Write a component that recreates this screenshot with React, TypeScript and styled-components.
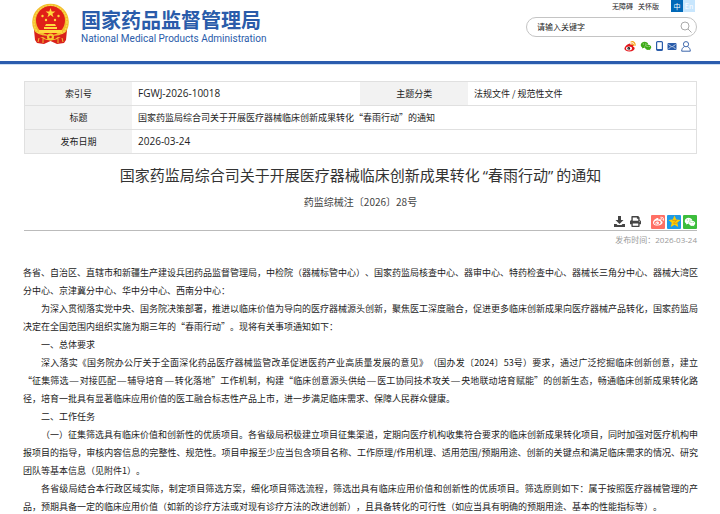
import React from 'react';
import styled, { createGlobalStyle } from 'styled-components';
import { AiFillWechat } from 'react-icons/ai';
import { FaWeibo, FaPrint } from 'react-icons/fa';

const CJK = '"Noto Sans CJK SC", sans-serif';

const GlobalStyle = createGlobalStyle`
  * { box-sizing: border-box; }
  body {
    margin: 0;
    background: #fff;
    color: #222;
    font: 9px/18px ${CJK};
    text-spacing-trim: space-all;
  }
  a { color: inherit; text-decoration: none; }
`;

const Latin = styled.span<{ $large?: boolean }>`
  font-family: "Open Sans", ${CJK};
  ${(p) => (p.$large ? 'font-size: 10px;' : '')}
`;

const Header = styled.header`
  display: flex;
  justify-content: space-between;
  align-items: flex-start;
  height: 65px;
  padding: 0 23px 0 31px;
  border-bottom: 1px solid #cfe0f3;
  box-shadow: inset 0 -3px 0 #2b5cae;
`;

const Brand = styled.a`
  display: flex;
  gap: 11px;
  padding-top: 3px;
`;

const BrandText = styled.span`
  display: flex;
  flex-direction: column;
  padding-top: 6px;
  color: #2a5caa;
`;

const BrandName = styled.span`
  font-size: 20px;
  line-height: 22px;
  font-weight: 700;
`;

const BrandEnglish = styled.span`
  font: 400 10px/16px Roboto, sans-serif;
`;

const Tools = styled.div`
  display: flex;
  flex-direction: column;
  align-items: flex-end;
  width: 171px;
`;

const Links = styled.nav`
  display: flex;
  font-size: 7px;
  line-height: 12px;
  gap: 5px;
  padding-right: 2px;
`;

const Languages = styled.div`
  display: flex;
  margin-left: 7px;
`;

const Language = styled.a<{ $active?: boolean }>`
  width: 12px;
  height: 12px;
  text-align: center;
  color: #fff;
  background: ${(p) => (p.$active ? '#0068b7' : '#c8e6fd')};
`;

const Search = styled.form`
  display: flex;
  align-items: center;
  width: 100%;
  height: 20px;
  margin-top: 5px;
  padding: 0 4px 0 10px;
  border: 1px solid #c4c4c4;
  border-radius: 10px;
`;

const SearchInput = styled.input`
  flex: 1;
  min-width: 0;
  padding: 0;
  border: 0;
  outline: 0;
  background: none;
  font: 8px/16px ${CJK};
  &::placeholder { color: #222; opacity: 1; }
`;

const IconButton = styled.button<{ $color?: string; $fill?: string }>`
  display: flex;
  align-items: center;
  justify-content: center;
  padding: 0;
  border: 0;
  border-radius: 1px;
  cursor: pointer;
  color: ${(p) => p.$color || '#444'};
  background: ${(p) => p.$fill || 'none'};
  ${(p) => (p.$fill ? 'width: 14px; height: 14px;' : '')}
`;

const Channels = styled.div`
  display: flex;
  align-items: center;
  gap: 4px;
  height: 14px;
  margin-top: 2px;
  padding-right: 6px;
`;

const Main = styled.main`
  padding: 16px 23px 0 24px;
`;

const InfoTable = styled.table`
  width: 100%;
  border-collapse: collapse;
  table-layout: fixed;
  border: 1px solid #e0e0e0;
`;

const Row = styled.tr`
  height: 24px;
  border-bottom: 1px solid #e0e0e0;
`;

const Label = styled.th`
  width: 16%;
  padding: 0;
  font-weight: 400;
  background: #f2f2f2;
`;

const Value = styled.td`
  padding: 0 6px;
`;

const Title = styled.h1`
  margin: 9px 0 0;
  text-align: center;
  font-size: 15px;
  line-height: 24px;
  font-weight: 400;
  color: #333;
`;

const Quote = styled.span`
  font-family: "Open Sans", ${CJK};
  &:first-of-type { margin-left: 3px; }
  &:last-of-type { margin-right: 3px; }
`;

const DocNumber = styled.p`
  margin: 6px 0 0;
  text-align: center;
  font-size: 10px;
  color: #444;
`;

const Actions = styled.div`
  display: flex;
  justify-content: flex-end;
  align-items: center;
  gap: 2px;
  height: 20px;
  padding-top: 2px;
  border-bottom: 1px solid #bbb;
`;

const DocTools = styled.div`
  display: flex;
  gap: 5px;
  margin-right: 8px;
`;

const Published = styled.p`
  margin: 0;
  text-align: right;
  font-size: 8px;
  color: #999;
`;

const Article = styled.article`
  margin: 0 -1px;
  padding-top: 15px;
`;

const Paragraph = styled.p<{ $flush?: boolean }>`
  margin: 0;
  text-align: justify;
  text-indent: ${(p) => (p.$flush ? '0' : '2em')};
`;

const Dash = styled.span`
  padding: 0 1px;
  font-family: "Liberation Sans", sans-serif;
`;

const withDashes = (text: string) =>
  text.split('—').map((part, i) => (
    <React.Fragment key={i}>
      {i > 0 && <Dash>—</Dash>}
      {part}
    </React.Fragment>
  ));

const Emblem = () => (
  <svg width="39" height="42" viewBox="0 0 39 42" aria-hidden="true">
    <path d="M3 27 4 37l2 3 7 1 6.500-3 6.500 3 7-1 2-3 1-10Z" fill="#d9211b" />
    <circle cx="19.500" cy="19" r="18.300" fill="#f3bd2c" />
    <circle cx="19.500" cy="19" r="16.500" fill="none" stroke="#f9d84c" strokeWidth="1.500" strokeDasharray="2 1" />
    <circle cx="19.500" cy="17.500" r="14.500" fill="#e01f18" />
    <path d="m19.500 5 1.200 3.500h3.700l-3 2.200 1.100 3.500-3-2.100-3 2.100 1.100-3.500-3-2.200h3.700Z" fill="#ffd83d" />
    <g fill="#ffd83d">
      <circle cx="11.500" cy="13" r="1.200" /><circle cx="15" cy="17" r="1.200" />
      <circle cx="24" cy="17" r="1.200" /><circle cx="27.500" cy="13" r="1.200" />
      <path d="M15 21h9l1 2H14ZM13 24h13v2H13ZM8 27h23v3H8Z" />
    </g>
    <path d="M4 29c5 3 9 4 15.500 4S30 32 35 29l-1 6-7-1-3 2h-9l-3-2-7 1Z" fill="#d9211b" />
    <circle cx="19.500" cy="34" r="3.500" fill="#f6c82f" />
    <circle cx="19.500" cy="34" r="1.300" fill="#d9211b" />
    <path d="m8 35-1 4m24-4 1 4M12 36v4m15-4v4" stroke="#f2bd35" strokeWidth="1" />
  </svg>
);

const SearchIcon = () => (
  <svg width="12" height="12" viewBox="0 0 12 12" fill="none" stroke="#aaa" strokeWidth="1">
    <circle cx="5" cy="5" r="4" /><path d="m8 8 3.500 3.500" />
  </svg>
);

const WeiboColor = () => (
  <svg width="12" height="11" viewBox="0 0 24 22">
    <path d="M9 6c3-2 5-1 4 2 4-2 7-1 5 3 7 3 2 10-7 10C4 21 0 18 1 14c1-3 4-6 8-8Z" fill="#e4161b" />
    <ellipse cx="10" cy="15" rx="6" ry="3.800" fill="#fff" />
    <circle cx="9.500" cy="15" r="2.800" fill="#222" />
    <circle cx="8.500" cy="16" r="1" fill="#fff" />
    <path d="M14 2c5-2 9 2 8 7M15 6c3-1 4 1 4 3" fill="none" stroke="#f6a21a" strokeWidth="2.400" strokeLinecap="round" />
  </svg>
);

const PhoneIcon = () => (
  <svg width="7" height="10" viewBox="0 0 7 10">
    <rect x=".6" y=".6" width="5.800" height="8.800" rx="1" fill="none" stroke="#2a5caa" strokeWidth="1.200" />
    <path d="M1 8h5v1H1Z" fill="#2a5caa" />
  </svg>
);

const MailIcon = () => (
  <svg width="10" height="7" viewBox="0 0 9 7">
    <rect width="9" height="7" rx="1" fill="#2a5caa" />
    <path d="m1 1.500 3.500 2.500L8 1.500M1 6l2-2m5 2L6 4" fill="none" stroke="#fff" strokeWidth=".7" />
  </svg>
);

const PersonIcon = () => (
  <svg width="10" height="11" viewBox="0 0 10 11" fill="none" stroke="#3c66ac" strokeWidth="1">
    <circle cx="5" cy="3.200" r="2.600" />
    <path d="M3.500 5.600C1.600 6.500.7 8 .7 10.200h8.600C9.300 8 8.400 6.500 6.500 5.600" />
  </svg>
);

const DownloadIcon = () => (
  <svg width="11" height="11" viewBox="0 0 11 11" fill="#444">
    <path d="M4 0h3v4h2.500l-4 4-4-4H4ZM0 8h2.500l1 1h4l1-1H11v3H0Z" />
  </svg>
);

const StarIcon = () => (
  <svg width="13" height="13" viewBox="0 0 24 24">
    <path d="m12 1 3.200 7.200 7.800.8-5.900 5.200L18.900 22 12 18l-6.900 4 1.800-7.800L1 9l7.800-.8Z" fill="#ffce00" />
    <path d="M8 10h8l-6 5c3 1 6 .5 8-1" fill="none" stroke="#d79018" strokeWidth="1.500" />
  </svg>
);

const paragraphs = [
  '为深入贯彻落实党中央、国务院决策部署，推进以临床价值为导向的医疗器械源头创新，聚焦医工深度融合，促进更多临床创新成果向医疗器械产品转化，国家药监局决定在全国范围内组织实施为期三年的“春雨行动”。现将有关事项通知如下：',
  '一、总体要求',
  '深入落实《国务院办公厅关于全面深化药品医疗器械监管改革促进医药产业高质量发展的意见》（国办发〔2024〕53号）要求，通过广泛挖掘临床创新创意，建立\u200b“征集筛选—对接匹配—辅导培育—转化落地”工作机制，构建“临床创意源头供给—医工协同技术攻关—央地联动培育赋能”的创新生态，畅通临床创新成果转化路径，培育一批具有显著临床应用价值的医工融合标志性产品上市，进一步满足临床需求、保障人民群众健康。',
  '二、工作任务',
  '（一）征集筛选具有临床价值和创新性的优质项目。各省级局积极建立项目征集渠道，定期向医疗机构收集符合要求的临床创新成果转化项目，同时加强对医疗机构申报项目的指导，审核内容信息的完整性、规范性。项目申报至少应当包含项目名称、工作原理/作用机理、适用范围/预期用途、创新的关键点和满足临床需求的情况、研究团队等基本信息（见附件1）。',
  '各省级局结合本行政区域实际，制定项目筛选方案，细化项目筛选流程，筛选出具有临床应用价值和创新性的优质项目。筛选原则如下：属于按照医疗器械管理的产品，预期具备一定的临床应用价值（如新的诊疗方法或对现有诊疗方法的改进创新），且具备转化的可行性（如应当具有明确的预期用途、基本的性能指标等）。',
];

export default function App() {
  return (
    <>
      <GlobalStyle />
      <Header>
        <Brand href="#">
          <Emblem />
          <BrandText>
            <BrandName>国家药品监督管理局</BrandName>
            <BrandEnglish>National Medical Products Administration</BrandEnglish>
          </BrandText>
        </Brand>
        <Tools>
          <Links>
            <a href="#">无障碍</a>
            <a href="#">关怀版</a>
            <Languages>
              <Language href="#" $active>中</Language>
              <Language href="#">En</Language>
            </Languages>
          </Links>
          <Search>
            <SearchInput type="text" placeholder="请输入关键字" aria-label="请输入关键字" />
            <IconButton type="submit" aria-label="搜索"><SearchIcon /></IconButton>
          </Search>
          <Channels>
            <IconButton aria-label="微博"><WeiboColor /></IconButton>
            <IconButton aria-label="微信" $color="#3fab18"><AiFillWechat size={12} /></IconButton>
            <IconButton aria-label="手机"><PhoneIcon /></IconButton>
            <IconButton aria-label="邮箱"><MailIcon /></IconButton>
            <IconButton aria-label="用户"><PersonIcon /></IconButton>
          </Channels>
        </Tools>
      </Header>
      <Main>
        <InfoTable>
          <colgroup>
            <col width="16%" /><col width="34%" /><col width="16%" /><col width="34%" />
          </colgroup>
          <tbody>
            <Row>
              <Label scope="row">索引号</Label>
              <Value><Latin $large>FGWJ-2026-10018</Latin></Value>
              <Label scope="row">主题分类</Label>
              <Value>法规文件 / 规范性文件</Value>
            </Row>
            <Row>
              <Label scope="row">标题</Label>
              <Value colSpan={3}>国家药监局综合司关于开展医疗器械临床创新成果转化“春雨行动”的通知</Value>
            </Row>
            <Row>
              <Label scope="row">发布日期</Label>
              <Value colSpan={3}><Latin $large>2026-03-24</Latin></Value>
            </Row>
          </tbody>
        </InfoTable>
        <Title>
          国家药监局综合司关于开展医疗器械临床创新成果转化<Quote>“</Quote>春雨行动<Quote>”</Quote>的通知
        </Title>
        <DocNumber>药监综械注〔2026〕28号</DocNumber>
        <Actions>
          <DocTools>
            <IconButton aria-label="下载"><DownloadIcon /></IconButton>
            <IconButton aria-label="打印"><FaPrint size={11} /></IconButton>
          </DocTools>
          <IconButton aria-label="分享到微博" $color="#fff" $fill="#ff6f64"><FaWeibo size={11} /></IconButton>
          <IconButton aria-label="分享到空间" $fill="#1e9be8"><StarIcon /></IconButton>
          <IconButton aria-label="分享到微信" $color="#fff" $fill="#3cbd3c"><AiFillWechat size={12} /></IconButton>
        </Actions>
        <Published>发布时间：<Latin>2026-03-24</Latin></Published>
        <Article>
          <Paragraph $flush>
            各省、自治区、直辖市和新疆生产建设兵团药品监督管理局，中检院（器械标管中心）、国家药监局核查中心、器审中心、特药检查中心、器械长三角分中心、器械大湾区分中心、京津冀分中心、华中分中心、西南分中心：
          </Paragraph>
          {paragraphs.map((text) => <Paragraph key={text}>{withDashes(text)}</Paragraph>)}
        </Article>
      </Main>
    </>
  );
}
